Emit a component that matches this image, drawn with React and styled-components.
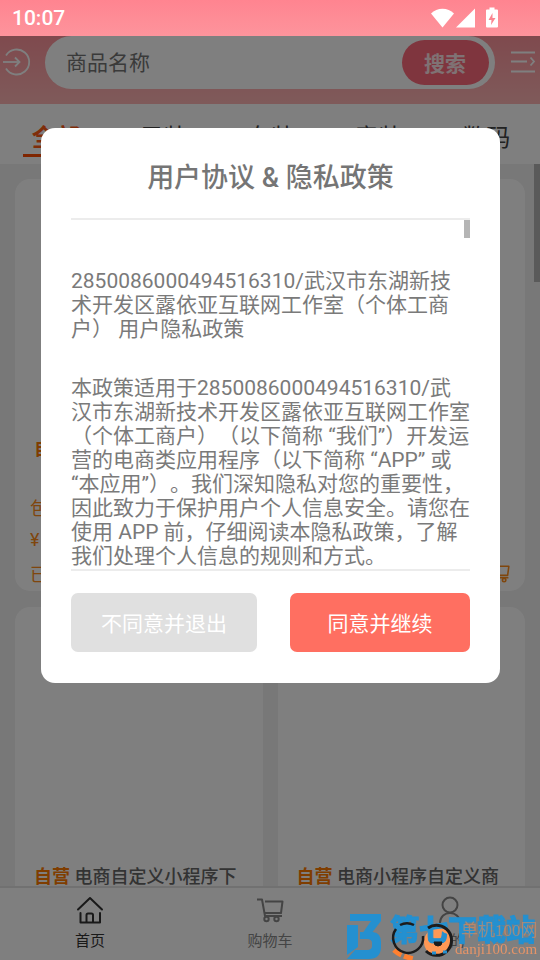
import React from 'react';
import styled, { createGlobalStyle } from 'styled-components';

const GlobalStyle = createGlobalStyle`
	* {
		box-sizing: border-box;
	}
	body {
		margin: 0;
		font-family: Roboto, "Noto Sans CJK SC", sans-serif;
		text-spacing-trim: space-all;
	}
	button, input {
		font-family: inherit;
	}
	h2, h3, p {
		margin: 0;
	}
`

const Page = styled('div')`
	display: flex;
	flex-direction: column;
	height: 100vh;
	overflow: hidden;
	background: #f0f0f0;
`

const StatusBar = styled('div')`
	display: flex;
	align-items: center;
	justify-content: space-between;
	flex: none;
	height: 36px;
	padding: 0 41px 0 12px;
	background: linear-gradient(#ff8490, #fd949c);
	color: #fff;
	font-size: 21px;
	font-weight: 500;
`

const StatusIcons = styled('div')`
	display: flex;
	align-items: center;
`

const Header = styled('header')`
	display: flex;
	align-items: flex-start;
	justify-content: space-between;
	flex: none;
	height: 68px;
	padding: 0 4px 0 3px;
	background: linear-gradient(#fe949c, #ffb5b5);
`

const IconButton = styled('button')`
	display: flex;
	align-items: center;
	height: 51px;
	padding: 0;
	border: 0;
	background: none;
`

const SearchForm = styled('form')`
	display: flex;
	flex: 1;
	align-items: center;
	height: 53px;
	margin: 0 16px 0 14px;
	padding: 0 6px 0 21px;
	border-radius: 27px;
	background: #fff;
`

const SearchInput = styled('input')`
	flex: 1;
	min-width: 0;
	padding: 0;
	border: 0;
	outline: 0;
	background: none;
	font-size: 21px;
	&::placeholder {
		color: #757575;
		opacity: 1;
	}
`

const SearchButton = styled('button')`
	height: 45px;
	padding: 0 23px 2px 22px;
	border: 0;
	border-radius: 23px;
	background: #ff6b7d;
	color: #ffe4e8;
	font-size: 21px;
	font-weight: bold;
`

const Tabs = styled('nav')`
	display: flex;
	flex: none;
	height: 60px;
	padding-left: 2px;
	background: #fff;
`

const Tab = styled('a')`
	display: flex;
	flex: 1;
	justify-content: center;
	height: 53px;
	margin: 0 21px;
	padding-top: 18px;
	border-bottom: 3px solid ${props => props.$active ? '#ff4b00' : 'transparent'};
	color: ${props => props.$active ? '#ff5a14' : '#444'};
	font-size: 24px;
	font-weight: ${props => props.$active ? 'bold' : 'normal'};
	line-height: 32px;
	white-space: nowrap;
	text-decoration: none;
`

const Products = styled('main')`
	position: relative;
	display: grid;
	flex: 1;
	grid-template-columns: 1fr 1fr;
	align-content: start;
	gap: 16px 15px;
	min-height: 0;
	padding: 15px;
	overflow: hidden;
`

const PageThumb = styled('div')`
	position: absolute;
	top: 0;
	right: 0;
	width: 6px;
	height: 118px;
	background: #b4b4b4;
`

const ProductCard = styled('article')`
	height: 412px;
	border-radius: 15px;
	background: #fff;
	overflow: hidden;
`

const ProductImage = styled('div')`
	height: 257px;
`

const ProductTitle = styled('h3')`
	height: 54px;
	padding: 0 18px 0 19px;
	color: #666;
	font-size: 18px;
	font-weight: 500;
	line-height: 25px;
`

const SelfTag = styled('span')`
	color: #ff7a00;
	font-weight: bold;
`

const ProductRow = styled('div')`
	display: flex;
	align-items: center;
	justify-content: space-between;
	height: 33px;
	padding: 0 15px;
	color: #ff8c1a;
	font-size: 18px;
`

const BottomNav = styled('nav')`
	display: flex;
	flex: none;
	height: 74px;
	border-top: 2px solid #e2e2e2;
	background: #fff;
`

const NavItem = styled('a')`
	display: flex;
	flex: 1;
	flex-direction: column;
	align-items: center;
	gap: 7px;
	padding-top: 8px;
	color: ${props => props.$active ? '#333' : '#888'};
	font-size: 15px;
	line-height: 20px;
	text-decoration: none;
`

const Overlay = styled('div')`
	position: fixed;
	inset: 36px 0 0;
	padding: 92px 40px 0 41px;
	background: rgba(0, 0, 0, 0.5);
`

const Dialog = styled('section')`
	padding: 34px 30px 31px;
	border-radius: 14px;
	background: #fff;
	color: #757575;
`

const DialogTitle = styled('h2')`
	padding-bottom: 24px;
	font-size: 27px;
	font-weight: 500;
	line-height: 32px;
	text-align: center;
`

const PolicyBox = styled('div')`
	position: relative;
	height: 353px;
	padding-top: 49px;
	border-top: 2px solid #ececec;
	border-bottom: 2px solid #ececec;
	overflow: hidden;
`

const PolicyThumb = styled('div')`
	position: absolute;
	top: 0;
	right: 0;
	width: 6px;
	height: 18px;
	background: #b5b5b5;
`

const PolicyText = styled('p')`
	margin-bottom: 35px;
	color: #7a7a7a;
	font-size: 21px;
	line-height: 24px;
`

const Actions = styled('div')`
	display: flex;
	justify-content: space-between;
	margin-top: 22px;
`

const ActionButton = styled('button')`
	min-width: 180px;
	height: 59px;
	padding: 0 30px 1px;
	border: 0;
	border-radius: 7px;
	background: ${props => props.$primary ? '#ff6f61' : '#e0e0e0'};
	color: #fff;
	font-size: 21px;
`

const Watermark = styled('div')`
	position: fixed;
	right: 0;
	bottom: 0;
	width: 200px;
	height: 54px;
	pointer-events: none;
`

const tabs = ['全部', '男装', '女装', '童装', '数码'];

const products = [
	'电商自定义小程序下',
	'电商小程序自定义商',
	'电商自定义小程序下',
	'电商小程序自定义商',
];

const StatusGlyphs = () => (
	<StatusIcons>
		<svg width="68" height="22" viewBox="0 0 68 22" fill="#fff">
			<path d="M0 6.500 C6 .2 17 .2 23 6.500 L11.500 20.500 Z" />
			<path d="M25 20.500 L44 1.500 V20.500 Z" />
			<path d="M58.500 0.500 h5 v2 h2.500 a1 1 0 0 1 1 1 v16 a1 1 0 0 1 -1 1 h-10 a1 1 0 0 1 -1 -1 v-16 a1 1 0 0 1 1 -1 h2.500 Z" />
			<path d="M61.500 6 L57.500 13 H60.500 L60 18 L64.500 11 H61.500 Z" fill="#fb8791" />
		</svg>
	</StatusIcons>
)

const LoginIcon = () => (
	<svg width="28" height="28" viewBox="0 0 28 28" fill="none" stroke="#fff" strokeWidth="1.800">
		<path d="M3 7.500 A12.500 12.500 0 1 1 3 20.500" />
		<path d="M0 14 H16" />
		<path d="M12 9.500 L16.500 14 L12 18.500" />
	</svg>
)

const MenuIcon = () => (
	<svg width="25" height="22" viewBox="0 0 25 22" fill="none" stroke="#fff" strokeWidth="1.800">
		<path d="M0 1.500 H24 M0 10.500 H16 M0 20.500 H24" />
		<path d="M19.500 6.500 L23 10.500 L19.500 14.500" />
	</svg>
)

const HomeIcon = () => (
	<svg width="28" height="28" viewBox="0 0 28 28" fill="none" stroke="currentColor" strokeWidth="2" strokeLinecap="round" strokeLinejoin="round">
		<path d="M2 13.500 L14 2 L26 13.500" />
		<path d="M4.500 17 V26.500 H24 V17" />
		<path d="M10.500 26 V19 Q10.500 17.500 12 17.500 H15.500 Q17 17.500 17 19 V26" />
	</svg>
)

const CartIcon = ({ size }) => (
	<svg width={size} height={size} viewBox="0 0 28 28" fill="none" stroke="currentColor" strokeWidth="2" strokeLinejoin="round">
		<path d="M1 3.500 H6 L9 20 H26" />
		<path d="M9 5.500 H26.500 L25 17 H8.500" />
		<circle cx="10.500" cy="23" r="2.200" />
		<circle cx="20.500" cy="23" r="2.200" />
	</svg>
)

const UserIcon = () => (
	<svg width="28" height="28" viewBox="0 0 28 28" fill="none" stroke="currentColor" strokeWidth="2">
		<circle cx="14" cy="9" r="7.500" />
		<path d="M4 27 C4 13.500 24 13.500 24 27" />
	</svg>
)

const SiteMark = () => (
	<Watermark>
		<svg width="200" height="54" viewBox="0 0 200 54">
			<path d="M54 44 Q60 50 74 53" fill="none" stroke="#ff8030" strokeWidth="5" strokeDasharray="9 3" />
			<circle cx="98" cy="36" r="14" fill="#ff9855" />
			<text x="50" y="35" fontSize="29" fontWeight="900" fontFamily="Noto Sans CJK SC, sans-serif" fill="#2490d0" stroke="#2490d0" strokeWidth="1">第七下载站</text>
			<text x="121" y="30" fontSize="17" fontFamily="Liberation Serif, Noto Sans CJK SC, serif" fill="#e08c5c" fillOpacity="0.600">单机100网</text>
			<path d="M56 23 A15 15 0 1 0 83 30 M60 19 A15 15 0 0 1 74 19" fill="none" stroke="#1c1c1c" strokeWidth="2.500" />
			<path d="M88 22 A15 15 0 1 1 86 45" fill="none" stroke="#1c1c1c" strokeWidth="3" />
			<path d="M94 36 H102 A4 4 0 0 1 94 36 Z" fill="#1c1c1c" stroke="#1c1c1c" />
			<path d="M92 47 h4 M103 46 h4" stroke="#2490d0" strokeWidth="3" />
			<text x="115" y="48" fontSize="15" fontFamily="Liberation Serif, serif" fill="#e59468">danji100.com</text>
			<g fill="#2490d0">
				<path d="M10 8 H41 V15 L31 28 H22 L31 15 H10 Z" />
				<path d="M7 19 H18 V41 L7 49 Z" />
				<path d="M20 26 H33 Q41 27 41 36 V42 Q40 53 29 53 H7 L15 44 H27 Q32 44 32 40 V37 Q32 33 27 33 H20 Z" />
			</g>
		</svg>
	</Watermark>
)

const Product = ({ title }) => (
	<ProductCard>
		<ProductImage />
		<ProductTitle><SelfTag>自营</SelfTag> {title}</ProductTitle>
		<ProductRow>包邮</ProductRow>
		<ProductRow>¥</ProductRow>
		<ProductRow>
			<span>已售</span>
			<CartIcon size={22} />
		</ProductRow>
	</ProductCard>
)

const PolicyDialog = () => (
	<Overlay>
		<Dialog role="dialog" aria-modal="true" aria-labelledby="policy-title">
			<DialogTitle id="policy-title">用户协议 &amp; 隐私政策</DialogTitle>
			<PolicyBox>
				<PolicyText>
					2850086000494516310/武汉市东湖新技术开发区露依亚互联网工作室（个体工商户） 用户隐私政策
				</PolicyText>
				<PolicyText>
					本政策适用于2850086000494516310/武汉市东湖新技术开发区露依亚互联网工作室（个体工商户）（以下简称 “我们”）开发运营的电商类应用程序（以下简称 “APP” 或 “本应用”）。我们深知隐私对您的重要性，因此致力于保护用户个人信息安全。请您在使用 APP 前，仔细阅读本隐私政策，了解我们处理个人信息的规则和方式。
				</PolicyText>
				<PolicyThumb />
			</PolicyBox>
			<Actions>
				<ActionButton type="button">不同意并退出</ActionButton>
				<ActionButton type="button" $primary>同意并继续</ActionButton>
			</Actions>
		</Dialog>
	</Overlay>
)

const App = () => {
	return (
		<Page lang="zh-CN">
			<GlobalStyle />
			<StatusBar>
				<span>10:07</span>
				<StatusGlyphs />
			</StatusBar>
			<Header>
				<IconButton type="button" aria-label="登录"><LoginIcon /></IconButton>
				<SearchForm>
					<SearchInput type="text" placeholder="商品名称" aria-label="商品名称" />
					<SearchButton type="button">搜索</SearchButton>
				</SearchForm>
				<IconButton type="button" aria-label="菜单"><MenuIcon /></IconButton>
			</Header>
			<Tabs>
				{tabs.map((name, i) => <Tab href="#" key={name} $active={i === 0}>{name}</Tab>)}
			</Tabs>
			<Products>
				{products.map((title, i) => <Product key={i} title={title} />)}
				<PageThumb />
			</Products>
			<BottomNav>
				<NavItem href="#" $active><HomeIcon />首页</NavItem>
				<NavItem href="#"><CartIcon size={28} />购物车</NavItem>
				<NavItem href="#"><UserIcon />我的</NavItem>
			</BottomNav>
			<PolicyDialog />
			<SiteMark />
		</Page>
	)
}

export default App;
